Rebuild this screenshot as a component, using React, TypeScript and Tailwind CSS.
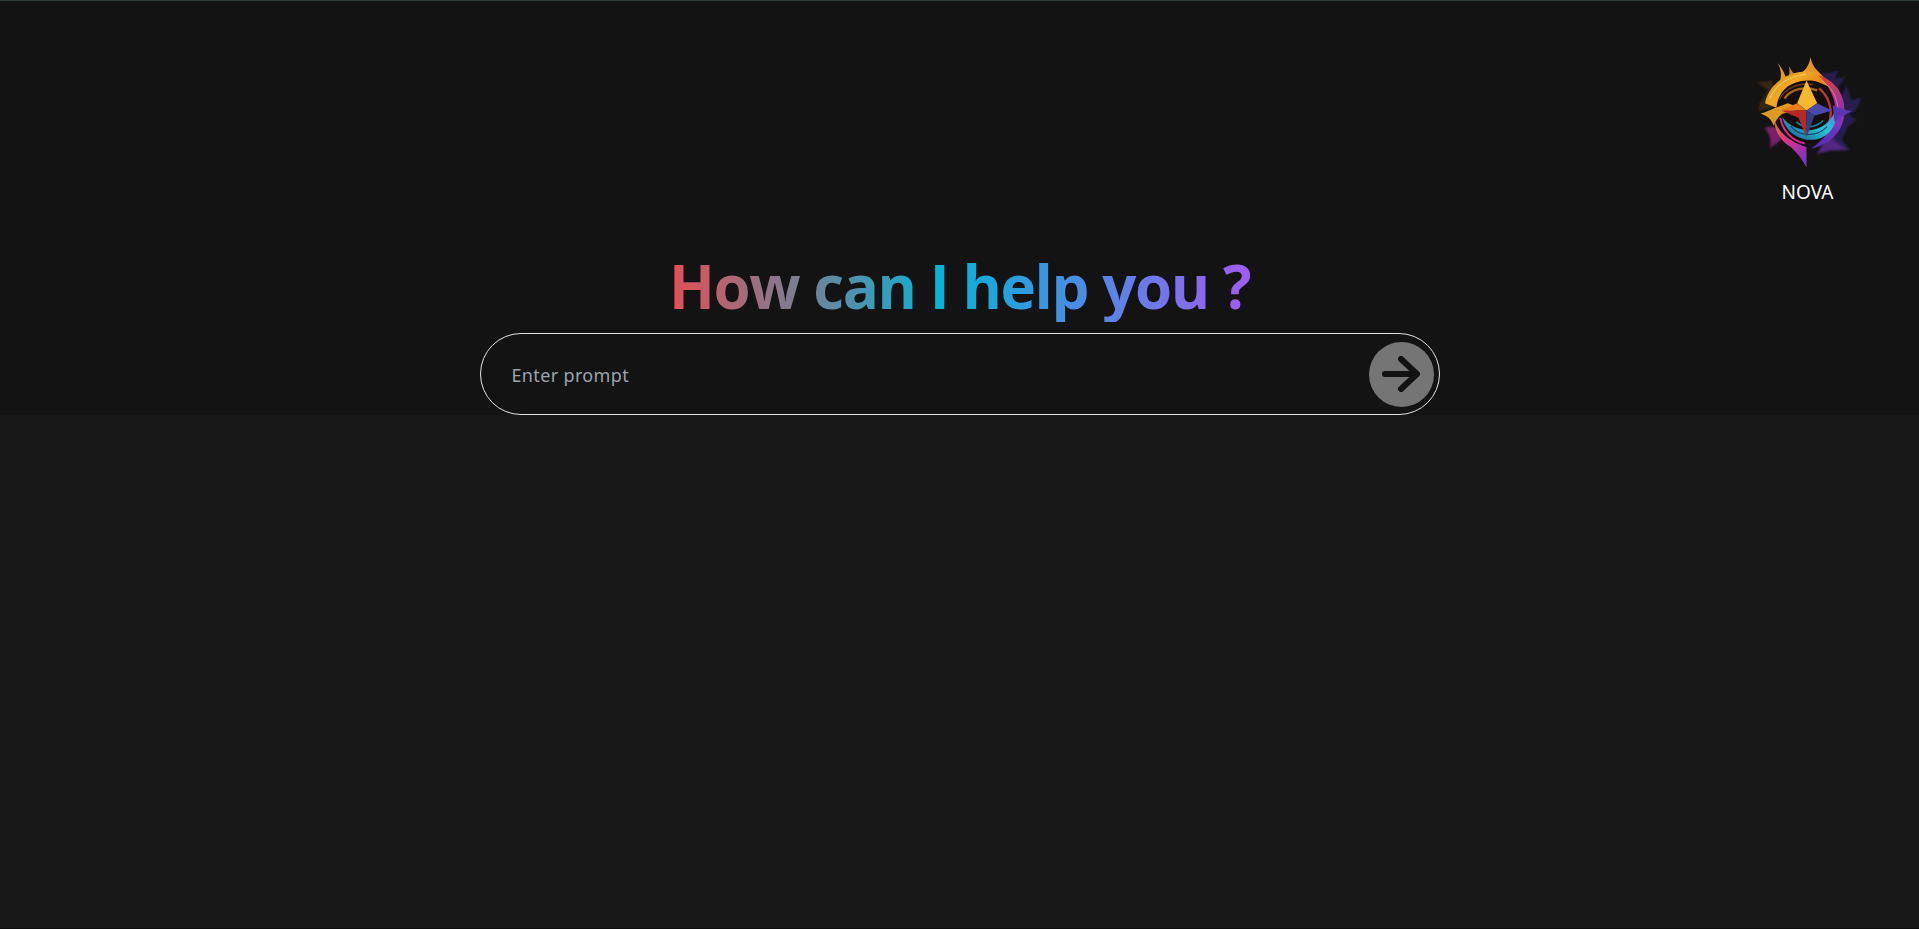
function NovaLogo() {
  return (
    <svg viewBox="90 40 350 350" className="w-[117px] h-[117px]" fill="none" aria-hidden="true">
      <defs>
        <linearGradient id="gold" x1="0" y1="0" x2="1" y2="0.6">
          <stop offset="0" stopColor="#c98a1c" />
          <stop offset="0.45" stopColor="#f0aa26" />
          <stop offset="1" stopColor="#e8621f" />
        </linearGradient>
        <linearGradient id="right" x1="0" y1="0" x2="0" y2="1">
          <stop offset="0" stopColor="#d8442e" />
          <stop offset="0.35" stopColor="#a8329c" />
          <stop offset="0.7" stopColor="#7a34c4" />
          <stop offset="1" stopColor="#4e2ca8" />
        </linearGradient>
        <linearGradient id="pink" x1="0" y1="0" x2="1" y2="1">
          <stop offset="0" stopColor="#c8841e" />
          <stop offset="0.4" stopColor="#e0308c" />
          <stop offset="1" stopColor="#6c34c6" />
        </linearGradient>
        <linearGradient id="teal" x1="0" y1="1" x2="1" y2="0">
          <stop offset="0" stopColor="#1c4f8c" />
          <stop offset="0.55" stopColor="#26c6d4" />
          <stop offset="1" stopColor="#5a74e0" />
        </linearGradient>
        <filter id="soft">
          <feGaussianBlur stdDeviation="1.6" />
        </filter>
        <filter id="wisp">
          <feGaussianBlur stdDeviation="3" />
        </filter>
      </defs>

      {/* dim wisps behind */}
      <g filter="url(#wisp)" opacity="0.85">
        <path d="M305 100 L332 100 L358 92 L345 118 L380 112 L358 140 L368 170 L382 132 L395 182 L428 172 L408 212 L388 226 L414 240 L385 262 L368 300 L392 330 L338 326 L300 340 L340 230Z" fill="#2a2158" />
        <path d="M330 285 C350 305 365 322 392 330 L335 332 L292 342Z" fill="#5e2a92" />
        <path d="M160 122 L112 128 L148 150 L122 190 L118 214 L170 200Z" fill="#3e2a0e" />
        <path d="M136 266 C150 258 166 258 182 270 L186 300 L152 326 C158 300 152 280 136 266Z" fill="#8c2478" />
      </g>

      <g filter="url(#soft)">
        <circle cx="258" cy="212" r="100" fill="#17100e" />

        {/* flames on top */}
        <path d="M176 70 C186 82 196 98 204 124 L176 140 C190 115 188 92 176 70Z" fill="#e89a22" />
        <path d="M210 80 C216 92 222 100 230 108 L204 124 C212 108 212 94 210 80Z" fill="#c98420" />
        <path d="M274 52 C278 76 290 90 306 104 C318 116 322 126 332 142 L262 112 L236 104 C258 96 270 78 274 52Z" fill="#eb9424" />

        {/* crescents of the ring */}
        <path d="M138 190 C150 130 210 92 272 96 C300 98 322 114 338 144 C304 122 262 116 226 130 C194 142 176 168 172 204Z" fill="url(#gold)" />
        <path d="M296 106 C350 122 384 172 374 232 C366 280 328 316 276 326 C312 300 342 268 348 222 C352 180 330 136 296 106Z" fill="url(#right)" />
        <path d="M166 240 C178 276 208 304 262 322 L262 382 C250 360 236 340 216 322 C186 304 166 276 166 240Z" fill="url(#pink)" />

        {/* streaks */}
        <path d="M152 176 C170 134 212 108 260 104" stroke="#fbd568" strokeWidth="3" opacity="0.8" />
        <path d="M180 180 C196 146 236 128 282 134" stroke="#6a3a0a" strokeWidth="4" />
        <path d="M310 124 C346 150 362 190 354 230" stroke="#f5b0a8" strokeWidth="2.5" opacity="0.7" />
        <path d="M300 146 C330 172 342 210 330 248" stroke="#b8383a" strokeWidth="7" />
        <path d="M196 176 C216 148 258 138 294 152" stroke="#a8641a" strokeWidth="7" />

        {/* teal swirl */}
        <path d="M190 232 C200 284 256 312 306 294 C340 278 356 246 350 206 C336 252 292 280 248 268 C222 262 204 250 190 232Z" fill="url(#teal)" />
        <path d="M214 258 C240 290 290 294 324 260" stroke="#123d6a" strokeWidth="3" />
        <path d="M232 246 C252 266 288 266 312 242" stroke="#1d7f9c" strokeWidth="5" />
        <path d="M184 234 C190 272 218 302 256 310" stroke="#d82a90" strokeWidth="6" />

        {/* long points */}
        <path d="M124 222 C150 214 176 200 206 190 L250 206 L190 222 C176 232 168 244 164 258 C158 240 146 228 124 222Z" fill="#dc9a22" />
        <path d="M340 196 C360 204 380 210 398 214 C380 222 362 232 346 246Z" fill="#5a34b4" />
      </g>

      {/* four point star */}
      <path d="M262 122 L294 190 L262 212 L234 190Z" fill="#f5b82e" />
      <path d="M262 212 L186 212 L234 190Z" fill="#ea7c1f" />
      <path d="M262 212 L294 190 L338 212 L286 228Z" fill="#4c48ac" />
      <path d="M262 212 L186 212 L238 234 L262 292Z" fill="#b82828" />
      <path d="M262 212 L286 228 L262 292Z" fill="#2c3e88" />
    </svg>
  );
}

export default function App() {
  return (
    <div className="[font-family:'Noto_Sans','Open_Sans','Liberation_Sans',sans-serif] min-h-screen bg-[#171717] border-b border-[#0c0c0c]">
      <section className="h-[415px] bg-[#131313] border-t border-[#2e3a38]">
        <div className="flex justify-end pt-[52px] pr-[53px]">
          <div className="flex flex-col items-center w-[117px]">
            <NovaLogo />
            <span className="mt-[9px] text-[19px] leading-[27px] text-white">NOVA</span>
          </div>
        </div>
        <h1 className="[font-family:'Open_Sans','Noto_Sans',sans-serif] mt-[44px] mx-auto w-fit text-[60px] leading-[72px] font-bold tracking-[-1.4px] bg-[linear-gradient(to_right,#e34f56,#06b3d8_47%,#a05cf2)] bg-clip-text text-transparent">
          How can I help you ?
        </h1>
        <form
          className="mt-[11px] mx-auto w-[960px] h-[82px] rounded-full border border-[#e5e5e5] flex items-center justify-between pl-[31px] pr-[5px]"
          onSubmit={(e) => e.preventDefault()}
        >
          <input
            type="text"
            placeholder="Enter prompt"
            className="flex-1 bg-transparent outline-none pt-[2px] text-[18px] tracking-[0.35px] text-white placeholder:text-[#9ca3af]"
          />
          <button type="submit" className="w-[65px] h-[65px] rounded-full bg-[#757575] flex items-center justify-center">
            <svg viewBox="0 0 40 36" className="w-[40px] h-[36px]" fill="none" stroke="#121212" strokeWidth="6" strokeLinecap="round" strokeLinejoin="round" aria-hidden="true">
              <path d="M4 18 H35" />
              <path d="M20 3 L36 18 L20 33" />
            </svg>
          </button>
        </form>
      </section>
    </div>
  );
}
